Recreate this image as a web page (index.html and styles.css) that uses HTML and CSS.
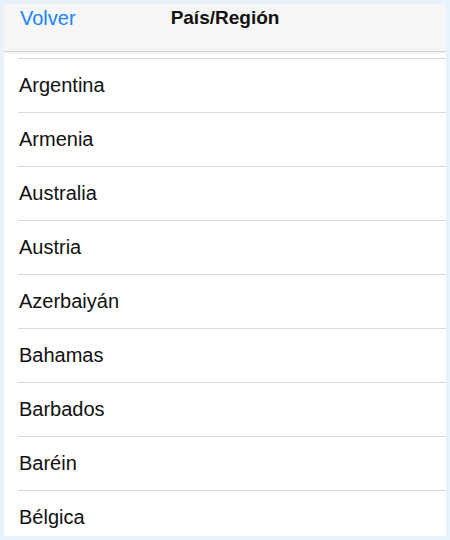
FILE: index.html
```html
<!DOCTYPE html>
<html lang="es">
<head>
  <meta charset="UTF-8">
  <meta name="viewport" content="width=device-width, initial-scale=1.0">
  <title>País/Región</title>
  <link rel="stylesheet" href="styles.css">
</head>
<body>
  <div class="screen">
    <div class="nav-bar">
      <span class="nav-back">Volver</span>
      <span class="nav-title">País/Región</span>
    </div>
    <ul class="country-list">
      <li class="country-item">Argentina</li>
      <li class="country-item">Armenia</li>
      <li class="country-item">Australia</li>
      <li class="country-item">Austria</li>
      <li class="country-item">Azerbaiyán</li>
      <li class="country-item">Bahamas</li>
      <li class="country-item">Barbados</li>
      <li class="country-item">Baréin</li>
      <li class="country-item">Bélgica</li>
    </ul>
  </div>
</body>
</html>
```

FILE: styles.css
```css
html, body {
  margin: 0;
  padding: 0;
}

body {
  background: #e8f2fb;
  font-family: "Liberation Sans", Arial, sans-serif;
  padding: 4px;
}

.screen {
  width: 442px;
  height: 532px;
  background: #ffffff;
  overflow: hidden;
}

.nav-bar {
  position: relative;
  height: 47px;
  background: #f6f6f6;
  border-bottom: 1px solid #d4d4d4;
  box-shadow: 0 1px 2px rgba(0, 0, 0, 0.08);
}

.nav-back {
  position: absolute;
  left: 16px;
  top: 3px;
  font-size: 20px;
  color: #1a82fb;
}

.nav-title {
  display: block;
  text-align: center;
  padding-top: 3px;
  font-size: 19px;
  font-weight: bold;
  color: #111111;
}

.country-list {
  list-style: none;
  margin: 6px 0 0 14px;
  padding: 0;
  border-top: 1px solid #d9d9d9;
}

.country-item {
  height: 53px;
  line-height: 53px;
  border-bottom: 1px solid #d9d9d9;
  padding-left: 1px;
  font-size: 20px;
  color: #111111;
}
```
